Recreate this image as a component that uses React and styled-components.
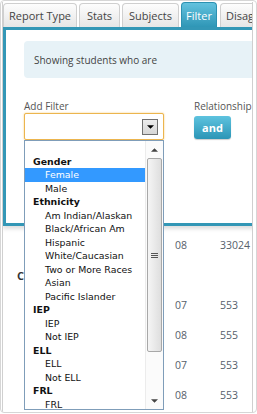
import React from 'react'
import styled, { createGlobalStyle } from 'styled-components'

const Global = createGlobalStyle`
  html, body { margin: 0; padding: 0; background: #fff; }
  body { font-family: "Open Sans", "Liberation Sans", sans-serif; }
`

const Frame = styled.div`
  box-sizing: border-box;
  width: 257px;
  height: 413px;
  border: 1px solid #d6d6d6;
  border-radius: 4px;
  padding: 1px 3px 0 1px;
  overflow: hidden;
`

const Clip = styled.div`
  position: relative;
  height: 100%;
  overflow: hidden;
  border-left: 1px solid #d0d0d0;
  border-right: 1px solid #cfcfcf;
`

const Tabs = styled.div`
  display: flex;
  align-items: flex-end;
  gap: 2px;
  height: 25px;
  white-space: nowrap;
`

const Tab = styled.div`
  box-sizing: border-box;
  flex: none;
  width: ${p => (p.$w ? `${p.$w}px` : 'auto')};
  height: ${p => (p.$active ? 25 : 24)}px;
  margin-right: ${p => (p.$active ? 1 : 0)}px;
  padding: 0 5px;
  display: flex;
  align-items: center;
  justify-content: ${p => (p.$w ? 'center' : 'flex-start')};
  font-size: 11px;
  color: ${p => (p.$active ? '#fff' : '#444')};
  border: 1px solid ${p => (p.$active ? '#2c91b1' : '#cfcfcf')};
  border-bottom: none;
  border-radius: 4px 4px 0 0;
  background: ${p =>
    p.$active
      ? 'linear-gradient(#63c2de, #2f96b6)'
      : 'linear-gradient(#fdfdfd, #e6e6e6)'};
`

const Panel = styled.div`
  box-sizing: border-box;
  width: 330px;
  height: 199px;
  border: 3px solid #3397b6;
  border-right: none;
  background: #fff;
  padding: 11px 0 0 18px;
  box-shadow: 0 3px 4px rgba(0, 0, 0, 0.13);
`

const Info = styled.div`
  width: 300px;
  height: 37px;
  border-radius: 4px;
  background: #e7f2f7;
  display: flex;
  align-items: center;
  padding-left: 10px;
  font-size: 10px;
  color: #444;
`

const FilterRow = styled.div`
  display: flex;
  gap: 30px;
  margin-top: 22px;
`

const Field = styled.div`
  display: flex;
  flex-direction: column;
`

const Label = styled.div`
  font-size: 10px;
  line-height: 12px;
  color: #555;
`

const SelectWrap = styled.div`
  position: relative;
  margin-top: 1px;
`

const Select = styled.div`
  box-sizing: border-box;
  width: 140px;
  height: 27px;
  border: 1px solid #ecb54e;
  border-radius: 2px;
  box-shadow: 0 0 2px #f3c874;
  display: flex;
  align-items: center;
  justify-content: flex-end;
  padding-right: 5px;
  background: #fff;
`

const ArrowBtn = styled.div`
  box-sizing: border-box;
  width: 16px;
  height: 16px;
  border: 1px solid #707070;
  background: linear-gradient(#ececec, #d6d6d6);
  display: flex;
  align-items: center;
  justify-content: center;
`

const ListBox = styled.div`
  position: absolute;
  top: 100%;
  left: 0;
  box-sizing: border-box;
  width: 140px;
  height: 270px;
  border: 1px solid #7f9db9;
  background: #fff;
  display: flex;
  z-index: 5;
`

const Options = styled.div`
  flex: 1;
  overflow: hidden;
  font-family: "DejaVu Sans", Verdana, sans-serif;
  font-size: 9.4px;
`

const Opt = styled.div`
  height: 13.5px;
  line-height: 13.5px;
  white-space: nowrap;
  padding-left: ${p => (p.$group ? 8 : 20)}px;
  font-weight: ${p => (p.$group ? 700 : 400)};
  color: ${p => (p.$selected ? '#fff' : '#111')};
  background: ${p => (p.$selected ? '#3399ff' : 'transparent')};
`

const ScrollBar = styled.div`
  width: 17px;
  display: flex;
  flex-direction: column;
  align-items: center;
  background: #fbfbfb;
  border-left: 1px solid #ececec;
`

const ScrollArrow = styled.div`
  height: 17px;
  width: 100%;
  display: flex;
  align-items: center;
  justify-content: center;
`

const Thumb = styled.div`
  box-sizing: border-box;
  width: 15px;
  height: 194px;
  border: 1px solid #a8a8a8;
  border-radius: 2px;
  background: linear-gradient(90deg, #f5f5f5, #dedede);
  display: flex;
  align-items: center;
  justify-content: center;
`

const Spacer = styled.div`
  flex: 1;
`

const AndBtn = styled.div`
  box-sizing: border-box;
  margin-top: 4px;
  width: 37px;
  height: 23px;
  border-radius: 3px;
  background: linear-gradient(#5ec3df, #2b95b6);
  box-shadow: 0 1px 1px rgba(0, 0, 0, 0.2);
  color: #fff;
  font-weight: 700;
  font-size: 11px;
  display: flex;
  align-items: center;
  justify-content: center;
`

const Table = styled.div`
  margin-top: 4px;
  padding-left: 14px;
  display: grid;
  grid-template-columns: 158px 45px auto;
  grid-auto-rows: 30px;
  align-items: center;
  font-size: 10.5px;
  color: #56606b;
`

const Heading = styled.div`
  grid-column: 1 / -1;
  font-weight: 700;
  color: #333;
  font-size: 11px;
`

const Down = ({ color = '#000' }) => (
  <svg width="7" height="4" viewBox="0 0 8 4">
    <path d="M0 0h8L4 4z" fill={color} />
  </svg>
)

const Up = () => (
  <svg width="7" height="4" viewBox="0 0 8 4">
    <path d="M0 4h8L4 0z" fill="#444" />
  </svg>
)

const Grip = () => (
  <svg width="7" height="7" viewBox="0 0 7 7">
    <path d="M0 1.5h7M0 3.5h7M0 5.5h7" stroke="#555" strokeWidth="1" />
  </svg>
)

const options = [
  { label: '' },
  { label: 'Gender', group: true },
  { label: 'Female', selected: true },
  { label: 'Male' },
  { label: 'Ethnicity', group: true },
  { label: 'Am Indian/Alaskan' },
  { label: 'Black/African Am' },
  { label: 'Hispanic' },
  { label: 'White/Caucasian' },
  { label: 'Two or More Races' },
  { label: 'Asian' },
  { label: 'Pacific Islander' },
  { label: 'IEP', group: true },
  { label: 'IEP' },
  { label: 'Not IEP' },
  { label: 'ELL', group: true },
  { label: 'ELL' },
  { label: 'Not ELL' },
  { label: 'FRL', group: true },
  { label: 'FRL' },
]

const rows = [
  ['07', '553'],
  ['08', '555'],
  ['07', '553'],
  ['08', '553'],
]

export default function App() {
  return (
    <>
      <Global />
      <Frame>
        <Clip>
          <Tabs>
            <Tab $w={74}>Report Type</Tab>
            <Tab $w={41}>Stats</Tab>
            <Tab $w={57}>Subjects</Tab>
            <Tab $w={36} $active>Filter</Tab>
            <Tab>Disaggregate</Tab>
          </Tabs>
          <Panel>
            <Info>Showing students who are</Info>
            <FilterRow>
              <Field>
                <Label>Add Filter</Label>
                <SelectWrap>
                  <Select>
                    <ArrowBtn>
                      <Down />
                    </ArrowBtn>
                  </Select>
                  <ListBox>
                    <Options>
                      {options.map((o, i) => (
                        <Opt key={i} $group={o.group} $selected={o.selected}>
                          {o.label || '\u00a0'}
                        </Opt>
                      ))}
                    </Options>
                    <ScrollBar>
                      <ScrollArrow>
                        <Up />
                      </ScrollArrow>
                      <Thumb>
                        <Grip />
                      </Thumb>
                      <Spacer />
                      <ScrollArrow>
                        <Down color="#444" />
                      </ScrollArrow>
                    </ScrollBar>
                  </ListBox>
                </SelectWrap>
              </Field>
              <Field>
                <Label>Relationship</Label>
                <AndBtn>and</AndBtn>
              </Field>
            </FilterRow>
          </Panel>
          <Table>
            <div />
            <div>08</div>
            <div>33024</div>
            <Heading>Cohort</Heading>
            {rows.map((r, i) => (
              <React.Fragment key={i}>
                <div />
                <div>{r[0]}</div>
                <div>{r[1]}</div>
              </React.Fragment>
            ))}
          </Table>
        </Clip>
      </Frame>
    </>
  )
}
